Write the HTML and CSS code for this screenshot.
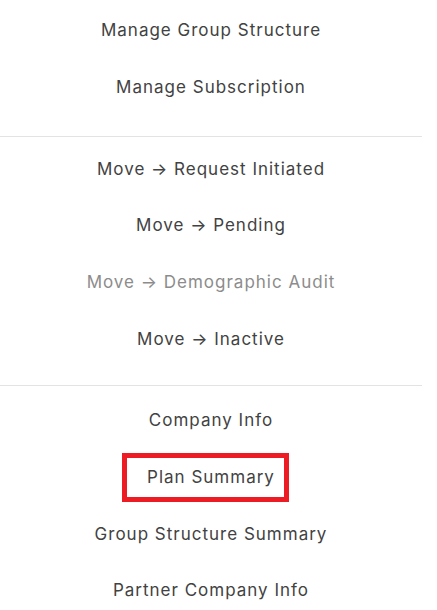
FILE: index.html
```html
<!DOCTYPE html>
<html lang="en">
<head>
    <meta charset="UTF-8">
    <title>Group Actions</title>
    <link rel="stylesheet" href="styles.css">
</head>
<body>
    <div class="menu">
        <div class="group first">
            <div class="item">Manage Group Structure</div>
            <div class="item">Manage Subscription</div>
        </div>
        <div class="group">
            <div class="item">Move &rarr; Request Initiated</div>
            <div class="item">Move &rarr; Pending</div>
            <div class="item disabled">Move &rarr; Demographic Audit</div>
            <div class="item">Move &rarr; Inactive</div>
        </div>
        <div class="group last">
            <div class="item">Company Info</div>
            <div class="item marked">
                Plan Summary
                <span class="highlight"></span>
            </div>
            <div class="item">Group Structure Summary</div>
            <div class="item">Partner Company Info</div>
        </div>
    </div>
</body>
</html>
```

FILE: styles.css
```css
body{
    margin: 0;
    background-color: #fff;
    font-family: 'Inter', sans-serif;
    height: 610px;
    overflow: hidden;
}
.menu{
    width: 422px;
    display: flex;
    flex-direction: column;
}
.group{
    padding: 3px 0 18px;
    border-top: 1px solid #e3e3e3;
}
.group.first{
    padding: 2px 0 21px;
    border-top: none;
}
.group.last{
    padding-top: 6px;
}
.item{
    height: 56.67px;
    display: flex;
    align-items: center;
    justify-content: center;
    font-size: 17px;
    font-weight: 400;
    letter-spacing: 1px;
    color: #424242;
    position: relative;
}
.item.disabled{
    color: #8c8c8c;
}
/* red annotation box drawn over the selected item */
.highlight{
    position: absolute;
    left: 122px;
    top: 4px;
    width: 167px;
    height: 49px;
    box-sizing: border-box;
    border: 5px solid #ed1c24;
}
```
